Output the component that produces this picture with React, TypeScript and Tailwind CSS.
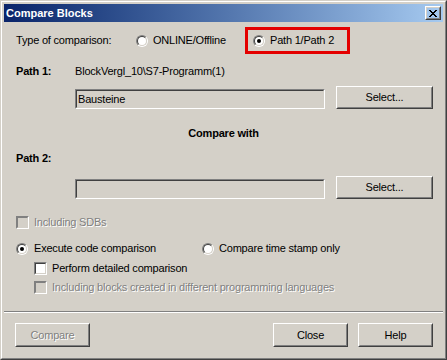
import React from "react";

const Radio = ({ checked = false }: { checked?: boolean }) => (
  <div className="w-[12px] h-[12px] shrink-0 rounded-full border border-t-[#808080] border-l-[#808080] border-r-white border-b-white">
    <div className="w-full h-full rounded-full border border-t-[#404040] border-l-[#404040] border-r-[#d4d0c8] border-b-[#d4d0c8] bg-white flex items-center justify-center">
      {checked && <div className="w-[4px] h-[4px] rounded-full bg-black" />}
    </div>
  </div>
);

const Checkbox = ({ disabled = false }: { disabled?: boolean }) => (
  <div className="w-[13px] h-[13px] shrink-0 border border-t-[#808080] border-l-[#808080] border-r-white border-b-white">
    <div
      className={
        disabled
          ? "w-full h-full border border-t-[#808080] border-l-[#808080] border-r-[#d4d0c8] border-b-[#d4d0c8] bg-[#d4d0c8]"
          : "w-full h-full border border-t-[#404040] border-l-[#404040] border-r-[#d4d0c8] border-b-[#d4d0c8] bg-white"
      }
    />
  </div>
);

const Button = ({
  children,
  disabled = false,
  className = "",
}: {
  children: React.ReactNode;
  disabled?: boolean;
  className?: string;
}) => (
  <div
    className={`shrink-0 border border-t-white border-l-white border-r-[#404040] border-b-[#404040] ${className}`}
  >
    <div className="w-full h-full border border-t-[#d4d0c8] border-l-[#d4d0c8] border-r-[#808080] border-b-[#808080] flex items-center justify-center">
      {disabled ? (
        <span className="text-[#808080] [text-shadow:1px_1px_0_#fff]">{children}</span>
      ) : (
        <span>{children}</span>
      )}
    </div>
  </div>
);

const TextBox = ({ value = "" }: { value?: string }) => (
  <div className="w-[250px] h-[20px] mt-[3px] shrink-0 border border-t-[#808080] border-l-[#808080] border-r-white border-b-white">
    <div className="w-full h-full border border-t-[#404040] border-l-[#404040] border-r-[#d4d0c8] border-b-[#d4d0c8] bg-[#d4d0c8] flex items-center pl-[1px]">
      {value}
    </div>
  </div>
);

const CloseIcon = () => (
  <svg width="8" height="7" viewBox="0 0 8 7" shapeRendering="crispEdges">
    <path d="M0 0h2v1h-2zM6 0h2v1h-2zM1 1h2v1h-2zM5 1h2v1h-2zM2 2h4v1h-4zM3 3h2v1h-2zM2 4h4v1h-4zM1 5h2v1h-2zM5 5h2v1h-2zM0 6h2v1h-2zM6 6h2v1h-2z" fill="#000" />
  </svg>
);

export default function App() {
  return (
    <div className="w-[447px] h-[360px] bg-[#d4d0c8] border border-t-[#d4d0c8] border-l-[#d4d0c8] border-r-[#404040] border-b-[#404040] font-['Liberation_Sans',Arial,sans-serif] text-[11px] leading-none text-black">
      <div className="w-full h-full border border-t-white border-l-white border-r-[#808080] border-b-[#808080] p-[2px] flex flex-col">
        {/* title bar */}
        <div className="h-[18px] shrink-0 flex items-center justify-between pl-[2px] pr-[2px] bg-gradient-to-r from-[#0a246a] to-[#a6caf0]">
          <span className="text-white font-bold">Compare Blocks</span>
          <Button className="w-[16px] h-[14px]">
            <CloseIcon />
          </Button>
        </div>

        <div className="flex flex-col tracking-[-0.2px]">
          {/* type of comparison */}
          <div className="mt-[5px] h-[27px] flex items-center pl-[12px]">
            <span className="w-[120px]">Type of comparison:</span>
            <div className="w-[109px] flex items-center gap-[5px]">
              <Radio />
              <span>ONLINE/Offline</span>
            </div>
            <div className="w-[105px] h-[27px] border-[3px] border-[#e40000] flex items-center pl-[5px] gap-[5px]">
              <Radio checked />
              <span>Path 1/Path 2</span>
            </div>
          </div>

          {/* path 1 */}
          <div className="mt-[10px] h-[14px] flex items-center pl-[12px]">
            <span className="w-[59px] font-bold">Path 1:</span>
            <span>BlockVergl_10\S7-Programm(1)</span>
          </div>
          <div className="mt-[8px] h-[23px] flex items-start pl-[71px] gap-[11px]">
            <TextBox value="Bausteine" />
            <Button className="w-[97px] h-[23px]">Select...</Button>
          </div>

          <div className="mt-[17px] h-[14px] flex items-center justify-center font-bold">Compare with</div>

          {/* path 2 */}
          <div className="mt-[11px] h-[14px] flex items-center pl-[12px]">
            <span className="font-bold">Path 2:</span>
          </div>
          <div className="mt-[11px] h-[23px] flex items-start pl-[71px] gap-[11px]">
            <TextBox />
            <Button className="w-[97px] h-[23px]">Select...</Button>
          </div>

          {/* options */}
          <div className="mt-[17px] h-[13px] flex items-center pl-[12px] gap-[5px]">
            <Checkbox disabled />
            <span className="text-[#808080] [text-shadow:1px_1px_0_#fff]">Including SDBs</span>
          </div>
          <div className="mt-[13px] h-[13px] flex items-center pl-[12px]">
            <div className="w-[186px] flex items-center gap-[6px]">
              <Radio checked />
              <span>Execute code comparison</span>
            </div>
            <div className="flex items-center gap-[5px]">
              <Radio />
              <span>Compare time stamp only</span>
            </div>
          </div>
          <div className="mt-[7px] h-[13px] flex items-center pl-[30px] gap-[5px]">
            <Checkbox />
            <span>Perform detailed comparison</span>
          </div>
          <div className="mt-[6px] h-[13px] flex items-center pl-[30px] gap-[5px]">
            <Checkbox disabled />
            <span className="text-[#808080] [text-shadow:1px_1px_0_#fff]">
              Including blocks created in different programming languages
            </span>
          </div>

          {/* separator */}
          <div className="mt-[17px] h-[2px] border-t border-t-[#808080] border-b border-b-white" />

          {/* bottom buttons */}
          <div className="mt-[10px] flex items-center pl-[11px] pr-[10px]">
            <Button disabled className="w-[75px] h-[24px]">
              Compare
            </Button>
            <div className="flex-1" />
            <Button className="w-[75px] h-[24px]">Close</Button>
            <Button className="w-[75px] h-[24px] ml-[10px]">Help</Button>
          </div>
        </div>
      </div>
    </div>
  );
}
